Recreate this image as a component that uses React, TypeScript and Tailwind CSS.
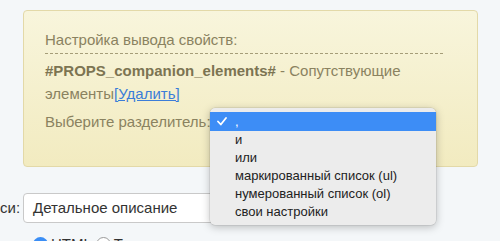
import React from "react";

export default function App() {
  const items = ["и", "или", "маркированный список (ul)", "нумерованный список (ol)", "свои настройки"];
  return (
    <div className="relative w-[500px] h-[241px] overflow-hidden bg-[#f4f7f9] font-['Liberation_Sans',Arial,sans-serif]">
      <div className="pt-[10px] pl-[23px]">
        <div className="w-[455px] h-[157px] rounded-[4px] border border-[#e3d9a8] bg-gradient-to-b from-[#f8f5dc] to-[#f2ebc0] pl-[21px] pt-[20px] text-[15px] text-[#8a8260]">
          <div className="leading-[18px]">Настройка вывода свойств:</div>
          <div className="mt-[4px] h-px w-[398px] bg-[repeating-linear-gradient(to_right,#a59d78_0_3px,transparent_3px_5px)]" />
          <div className="mt-[5px] w-[398px] leading-[23px]">
            <span className="font-bold text-[#7c7452]">#PROPS_companion_elements#</span> - Сопутствующие элементы
            <a className="text-[#3b7dd8] underline">[Удалить]</a>
          </div>
          <div className="mt-[8px] leading-[18px]">Выберите разделитель:</div>
        </div>
      </div>

      <div className="mt-[26px] flex items-center">
        <div className="w-[23px] text-[15px] text-[#333] leading-[18px]">си:</div>
        <div className="flex h-[30px] w-[230px] items-center rounded-[4px] border border-[#c9c9c9] bg-white pl-[9px] text-[15px] text-[#333]">
          Детальное описание
        </div>
      </div>
      <div className="mt-[12px] flex items-center text-[15px] text-[#333] leading-[18px]">
        <div className="w-[33px]">ат:</div>
        <div className="flex h-[15px] w-[15px] items-center justify-center rounded-full bg-[#3b8ef5]">
          <div className="h-[6px] w-[6px] rounded-full bg-white" />
        </div>
        <span className="ml-[3px]">HTML</span>
        <div className="ml-[4px] h-[15px] w-[15px] rounded-full border border-[#9a9a9a] bg-white" />
        <span className="ml-[3px]">Текст</span>
      </div>

      <div className="absolute left-[210px] top-[108px] w-[226px] rounded-[5px] bg-[#ececec] py-[4px] shadow-[0_2px_8px_rgba(0,0,0,0.25),0_0_0_0.5px_rgba(0,0,0,0.12)] text-[13px] text-[#222]">
        <div className="flex h-[19px] items-center bg-[#3d8df6] text-white">
          <svg className="ml-[7px]" width="10" height="9" viewBox="0 0 10 9">
            <polyline points="1,4.5 3.8,7.5 9,1" fill="none" stroke="white" strokeWidth="1.8" strokeLinecap="round" strokeLinejoin="round" />
          </svg>
          <span className="ml-[8px]">,</span>
        </div>
        {items.map((t) => (
          <div key={t} className="flex h-[18px] items-center pl-[25px]">
            {t}
          </div>
        ))}
      </div>
    </div>
  );
}
